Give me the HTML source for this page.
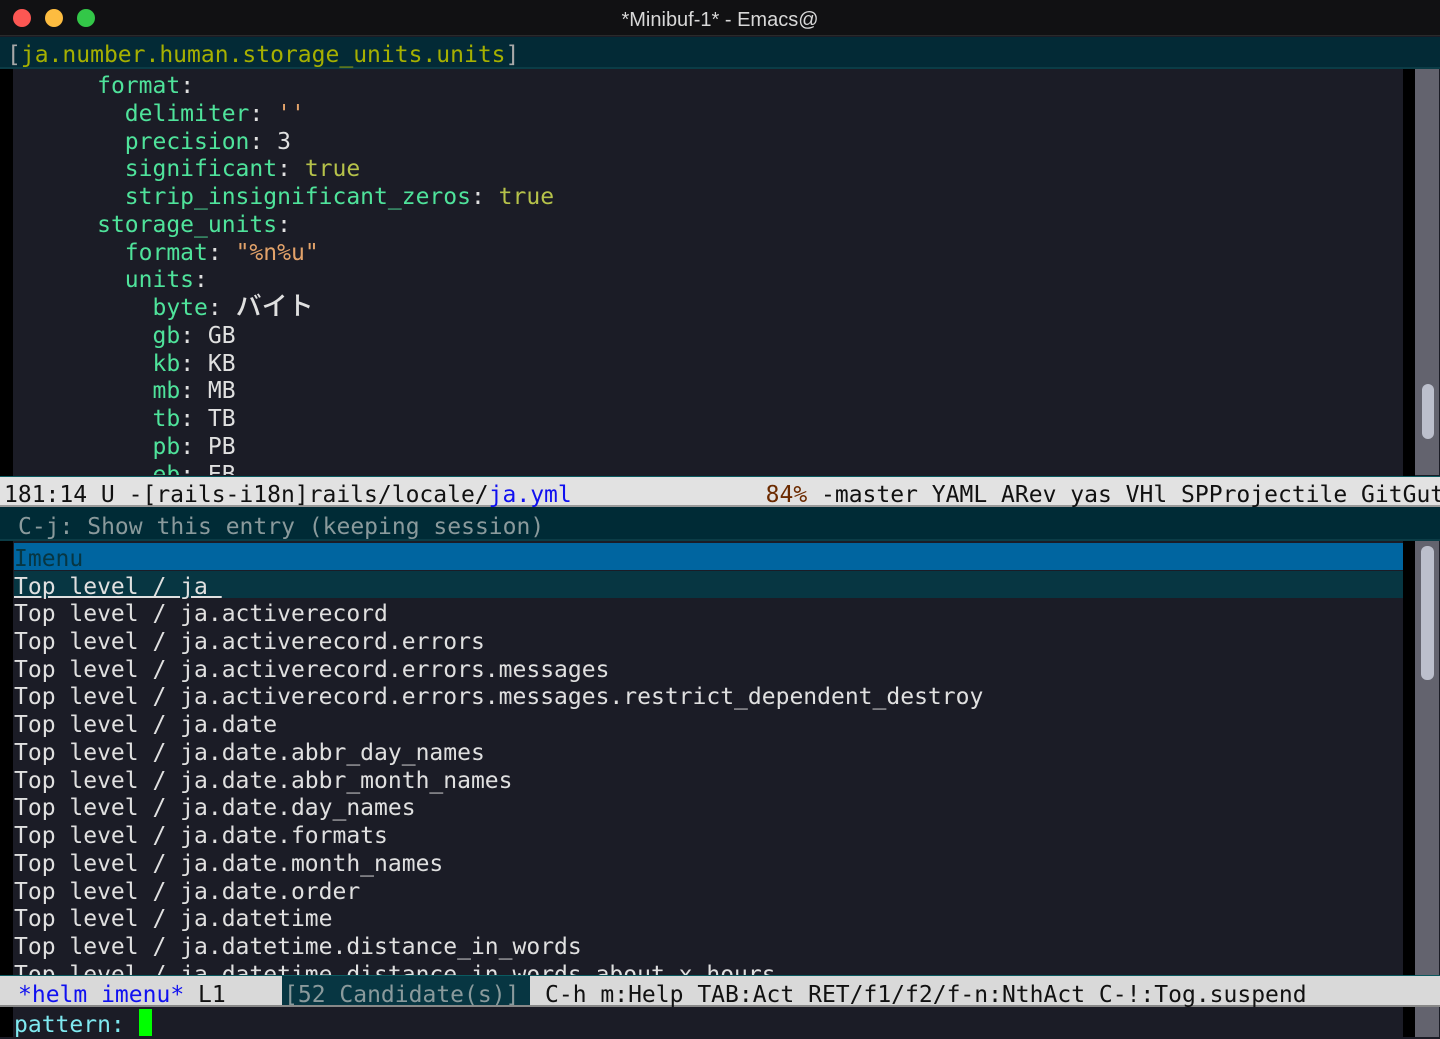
<!DOCTYPE html>
<html><head><meta charset="utf-8"><style>
*{margin:0;padding:0;box-sizing:border-box}
body{width:1440px;height:1037px;background:#1b1c26;position:relative;overflow:hidden;font-family:"DejaVu Sans Mono","Liberation Mono","Noto Sans CJK JP",monospace;font-size:23px;color:#e0e0e0}
.a{position:absolute;white-space:pre;line-height:28px}
.k{color:#4fe39b}.t{color:#b6c24a}.s{color:#e2a26a}
#title{position:absolute;left:0;top:0;width:1440px;height:36px;background:#111113;border-bottom:1px solid #2a2a2a}
#title .tt{position:absolute;left:0;width:1440px;top:9px;text-align:center;font-family:"Liberation Sans",sans-serif;font-size:20px;color:#d8d8d8}
.dot{position:absolute;top:9px;width:18px;height:18px;border-radius:50%}
.jp{font-family:"Noto Sans CJK JP",sans-serif;font-size:26px;font-weight:500;line-height:0}
</style></head><body>
<div id="title">
<div class="dot" style="left:13px;background:#fc5753"></div>
<div class="dot" style="left:45px;background:#fdbc40"></div>
<div class="dot" style="left:77px;background:#33c748"></div>
<div class="tt">*Minibuf-1* - Emacs@</div>
</div>
<div style="position:absolute;left:0;top:37px;width:1440px;height:32px;background:#032a36;border-bottom:2px solid #0b3c46"></div>
<div class="a" style="left:7px;top:41px;color:#a8a8a8">[<span style="color:#a6b000">ja.number.human.storage_units.units</span>]</div>
<div style="position:absolute;left:0;top:69px;width:13px;height:968px;background:#000"></div>
<div style="position:absolute;left:1403px;top:69px;width:12px;height:968px;background:#000"></div>
<div style="position:absolute;left:1415px;top:69px;width:24px;height:406px;background:#63636e"></div>
<div style="position:absolute;left:1422px;top:384px;width:12px;height:55px;border-radius:6px;background:#bcbfcc"></div>
<div style="position:absolute;left:1415px;top:541px;width:24px;height:496px;background:#63636e"></div>
<div style="position:absolute;left:1421px;top:546px;width:13px;height:134px;border-radius:6px;background:#bcbfcc"></div>
<div style="position:absolute;left:14px;top:71px;width:1389px;height:404px;overflow:hidden">
<div class="a" style="left:0;top:2px;line-height:27.75px">      <span class="k">format</span>:
        <span class="k">delimiter</span>: <span class="s">''</span>
        <span class="k">precision</span>: 3
        <span class="k">significant</span>: <span class="t">true</span>
        <span class="k">strip_insignificant_zeros</span>: <span class="t">true</span>
      <span class="k">storage_units</span>:
        <span class="k">format</span>: <span class="s">"%n%u"</span>
        <span class="k">units</span>:
          <span class="k">byte</span>: <span class="jp">バイト</span>
          <span class="k">gb</span>: GB
          <span class="k">kb</span>: KB
          <span class="k">mb</span>: MB
          <span class="k">tb</span>: TB
          <span class="k">pb</span>: PB
          <span class="k">eb</span>: EB</div>
</div>
<div style="position:absolute;left:0;top:476px;width:1440px;height:31px;background:#e2e2e2;border-top:1px solid #0b5a60;border-bottom:2px solid #9a9a9a"></div>
<div class="a" style="left:4px;top:481px;color:#111;width:1436px;overflow:hidden">181:14 U -[rails-i18n]rails/locale/<span style="color:#1010f0">ja.yml</span>              <span style="color:#6b2a00">84%</span> -master YAML ARev yas VHl SPProjectile GitGutter</div>
<div style="position:absolute;left:0;top:507px;width:1440px;height:34px;background:#002b36;border-bottom:2px solid #0b3c46"></div>
<div class="a" style="left:18px;top:513px;color:#8a9a9c">C-j: Show this entry (keeping session)</div>
<div style="position:absolute;left:14px;top:543px;width:1389px;height:27px;background:#0065a0"></div>
<div class="a" style="left:14px;top:545px;color:#073642">Imenu</div>
<div style="position:absolute;left:14px;top:571px;width:1389px;height:27px;background:#073642"></div>
<div class="a" style="left:14px;top:573px;text-decoration:underline">Top level / ja </div>
<div style="position:absolute;left:14px;top:599px;width:1389px;height:376px;overflow:hidden">
<div class="a" style="left:0;top:2px;line-height:27.75px">Top level / ja.activerecord
Top level / ja.activerecord.errors
Top level / ja.activerecord.errors.messages
Top level / ja.activerecord.errors.messages.restrict_dependent_destroy
Top level / ja.date
Top level / ja.date.abbr_day_names
Top level / ja.date.abbr_month_names
Top level / ja.date.day_names
Top level / ja.date.formats
Top level / ja.date.month_names
Top level / ja.date.order
Top level / ja.datetime
Top level / ja.datetime.distance_in_words
Top level / ja.datetime.distance_in_words.about_x_hours</div>
</div>
<div style="position:absolute;left:0;top:975px;width:1440px;height:32px;background:#d9d9d9;border-top:1px solid #0b5a60;border-bottom:2px solid #888"></div>
<div style="position:absolute;left:282px;top:976px;width:248px;height:29px;background:#073642"></div>
<div class="a" style="left:18px;top:981px;color:#111"><span style="color:#1010f0">*helm imenu*</span> L1</div>
<div class="a" style="left:284px;top:981px;color:#8a9a9c">[52 Candidate(s)]</div>
<div class="a" style="left:545px;top:981px;color:#111">C-h m:Help TAB:Act RET/f1/f2/f-n:NthAct C-!:Tog.suspend</div>
<div class="a" style="left:14px;top:1011px;color:#7fe9f0">pattern: </div>
<div style="position:absolute;left:139px;top:1009px;width:13px;height:27px;background:#00ff00"></div>
</body></html>
